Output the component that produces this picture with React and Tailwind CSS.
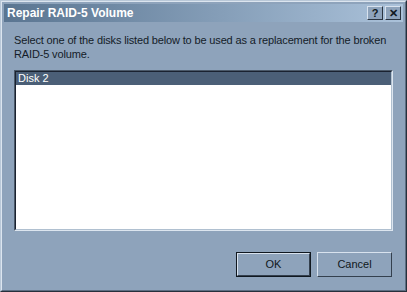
import React from 'react';

function CaptionButton({ children }) {
  return (
    <div className="flex h-[14px] w-[16px] items-center justify-center border border-t-[#d8e2ee] border-l-[#d8e2ee] border-r-[#2a3440] border-b-[#2a3440] bg-[#8ea3bb] text-[11px] font-bold leading-none text-[#101820]">
      {children}
    </div>
  );
}

function PushButton({ label, isDefault }) {
  return (
    <div className={`flex h-[25px] w-[75px] items-center justify-center ${isDefault ? 'border border-[#101820]' : ''}`}>
      <div className="flex h-full w-full items-center justify-center border border-t-[#d8e2ee] border-l-[#d8e2ee] border-r-[#34404e] border-b-[#34404e] text-[11px] text-[#101820]">
        {label}
      </div>
    </div>
  );
}

export default function App() {
  return (
    <div className="h-[292px] w-[407px] overflow-hidden bg-[#8ea3bb] font-['Liberation_Sans',Arial,sans-serif]">
      <div className="flex h-full w-full flex-col border border-t-[#b9c8d8] border-l-[#b9c8d8] border-r-[#26303c] border-b-[#26303c]">
        <div className="flex h-full w-full flex-col border border-t-[#dce5ef] border-l-[#dce5ef] border-r-[#5d6e82] border-b-[#5d6e82] p-[2px]">
          <div className="flex h-[18px] items-center justify-between bg-gradient-to-r from-[#5a7591] to-[#abc2da] pl-[3px] pr-[2px]">
            <span className="text-[12px] font-bold text-white">Repair RAID-5 Volume</span>
            <div className="flex gap-[2px]">
              <CaptionButton>?</CaptionButton>
              <CaptionButton>✕</CaptionButton>
            </div>
          </div>
          <div className="flex flex-1 flex-col px-[10px] pt-[11px]">
            <p className="whitespace-nowrap text-[11px] leading-[14px] tracking-[-0.15px] text-[#141c28]">
              Select one of the disks listed below to be used as a replacement for the broken
              <br />
              RAID-5 volume.
            </p>
            <div className="mt-[9px] h-[161px] w-[379px] border border-t-[#4a5868] border-l-[#4a5868] border-r-[#dce5ef] border-b-[#dce5ef]">
              <div className="h-full w-full border border-t-[#1a2230] border-l-[#1a2230] border-r-[#b0c0d0] border-b-[#b0c0d0] bg-white">
                <div className="h-[13px] bg-[#4b5f77] pl-[2px] text-[11px] leading-[13px] text-white">Disk 2</div>
              </div>
            </div>
            <div className="mt-[21px] flex justify-end gap-[6px] pr-[1px]">
              <PushButton label="OK" isDefault />
              <PushButton label="Cancel" />
            </div>
          </div>
        </div>
      </div>
    </div>
  );
}
